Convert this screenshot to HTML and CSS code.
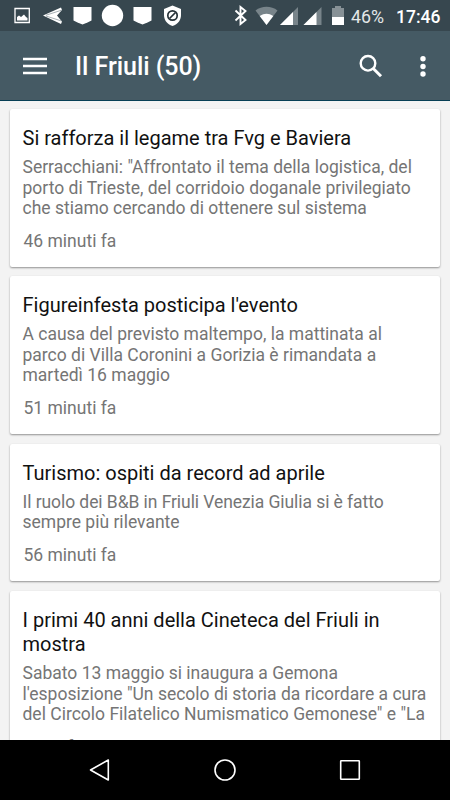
FILE: index.html
```html
<!DOCTYPE html>
<html lang="it">
<head>
  <meta charset="UTF-8">
  <title>Il Friuli</title>
  <link rel="stylesheet" href="styles.css">
</head>
<body>
  <div class="status-bar">
    <svg class="status-icons" width="190" height="31" viewBox="0 0 190 31" fill="#fff">
      <path d="M15 8.500h14.300v14H15z" fill="none" stroke="#fff" stroke-width="1.300"/>
      <path d="M17 20.500v-3.500l2-1.500 2 1.500 3-2.500 2 2.500 1.500 1v2.500z"/>
      <path d="M43 15.500L61 7.500l1 2.500-5 5.500 5 6-1 2.500z"/>
      <path d="M46 15.200l15.500-5M46 16l15.500 5" fill="none" stroke="#6b7a82" stroke-width=".6"/>
      <path d="M73.500 7h18v13.500l-4 2-5 2-5-2-4-2z"/>
      <circle cx="112.500" cy="15.500" r="10.700"/>
      <path d="M133.500 7h18v13.500l-4 2-5 2-5-2-4-2z"/>
      <path d="M172.500 5.500l8.500 3.500v6c0 5-3 9-8.500 11-5.500-2-8.500-6-8.500-11V9z"/>
      <circle cx="172.500" cy="15.500" r="4.700" fill="none" stroke="#263238" stroke-width="1.700"/>
      <path d="M169.500 18.500l6-6" stroke="#263238" stroke-width="1.700"/>
    </svg>
    <svg class="system-icons" width="120" height="31" viewBox="230 0 120 31" fill="#fff">
      <path d="M235.500 10.500l10 9.500-5 4V7l5 4-10 9.500" fill="none" stroke="#fff" stroke-width="1.900"/>
      <path d="M255.500 10.500a18 18 0 0 1 22 0L266.500 25z" fill="#78848a"/>
      <path d="M259.700 16a12 12 0 0 1 13.600 0L266.500 25z"/>
      <path d="M298 7v18h-18z" fill="#78848a"/>
      <path d="M293 12v13h-13z"/>
      <path d="M321.500 7v18h-18z" fill="#78848a"/>
      <path d="M316.500 12v13h-13z"/>
      <path d="M332 8h3V6h6v2h3v9h-12z" fill="#879196"/>
      <path d="M332 17h12v8h-12z"/>
    </svg>
    <span class="battery">46%</span>
    <span class="clock">17:46</span>
  </div>

  <div class="toolbar">
    <svg class="menu" width="24" height="18" viewBox="0 0 24 18">
      <path d="M0 2h24M0 9h24M0 16h24" stroke="#fff" stroke-width="2.300"/>
    </svg>
    <h1>Il Friuli (50)</h1>
    <svg class="search" width="24" height="24" viewBox="0 0 24 24" fill="none" stroke="#fff">
      <circle cx="9" cy="9.300" r="7.300" stroke-width="2.400"/>
      <path d="M14 14.300l8 8" stroke-width="3"/>
    </svg>
    <svg class="more" width="6" height="22" viewBox="0 0 6 22" fill="#fff">
      <circle cx="3" cy="3.800" r="2.700"/>
      <circle cx="3" cy="11.500" r="2.700"/>
      <circle cx="3" cy="19" r="2.700"/>
    </svg>
  </div>

  <div class="feed">
    <div class="card">
      <h2>Si rafforza il legame tra Fvg e Baviera</h2>
      <p>Serracchiani: "Affrontato il tema della logistica, del<br>porto di Trieste, del corridoio doganale privilegiato<br>che stiamo cercando di ottenere sul sistema</p>
      <div class="time">46 minuti fa</div>
    </div>
    <div class="card">
      <h2>Figureinfesta posticipa l'evento</h2>
      <p>A causa del previsto maltempo, la mattinata al<br>parco di Villa Coronini a Gorizia è rimandata a<br>martedì 16 maggio</p>
      <div class="time">51 minuti fa</div>
    </div>
    <div class="card">
      <h2>Turismo: ospiti da record ad aprile</h2>
      <p><span class="tight">Il ruolo dei B&amp;B in Friuli Venezia Giulia si è fatto</span><br>sempre più rilevante</p>
      <div class="time">56 minuti fa</div>
    </div>
    <div class="card">
      <h2>I primi 40 anni della Cineteca del Friuli in<br>mostra</h2>
      <p>Sabato 13 maggio si inaugura a Gemona<br>l'esposizione "Un secolo di storia da ricordare a cura<br>del Circolo Filatelico Numismatico Gemonese" e "La</p>
      <div class="time">1 ora fa</div>
    </div>
  </div>

  <div class="nav-bar">
    <svg width="24" height="24" viewBox="0 0 24 24"><path d="M20.300 2v20L2.500 12z"/></svg>
    <svg width="24" height="24" viewBox="0 0 24 24"><circle cx="12" cy="12" r="10"/></svg>
    <svg width="24" height="24" viewBox="0 0 24 24"><rect x="2.700" y="2.700" width="18.600" height="18.600" rx=".5"/></svg>
  </div>
</body>
</html>
```
FILE: styles.css
```css
body {
  display: flex;
  flex-direction: column;
  height: 800px;
  margin: 0;
  overflow: hidden;
  font-family: Roboto, sans-serif;
  background: #f3f3f3;
}
h1, h2, p {
  margin: 0;
  font-weight: 400;
}
svg {
  display: block;
  flex: none;
}
.status-bar {
  display: flex;
  flex: none;
  align-items: center;
  height: 31px;
  background: #37474f;
  color: #fff;
  white-space: nowrap;
}
.system-icons {
  margin-left: 40px;
}
.battery {
  width: 45px;
  margin-left: 1px;
  padding-top: 2px;
  font-size: 17.8px;
  color: #e4e7e8;
}
.clock {
  padding-top: 2px;
  font-size: 17.5px;
  font-weight: 500;
}
.toolbar {
  display: flex;
  flex: none;
  align-items: center;
  box-sizing: border-box;
  height: 70px;
  padding: 0 24.5px 0 23px;
  background: #455a64;
  border-bottom: 1px solid #073f55;
}
.toolbar h1 {
  flex: 1;
  margin-left: 28px;
  padding-top: 2px;
  font-size: 25px;
  letter-spacing: -0.05px;
  font-weight: 500;
  color: #fff;
}
.search {
  margin-right: 37px;
}
.feed {
  display: flex;
  flex: 1;
  flex-direction: column;
  gap: 10px;
  min-height: 0;
  padding: 8px 10px 0;
  overflow: hidden;
}
.card {
  flex: none;
  box-sizing: border-box;
  padding: 17px 13px 15px 12.5px;
  background: #fff;
  border-radius: 2px;
  box-shadow: 0 1px 2px rgba(0, 0, 0, 0.4);
  white-space: nowrap;
}
.card:first-child {
  margin-bottom: -0.5px;
}
.card h2 {
  font-size: 20px;
  line-height: 24px;
  color: #111;
}
.card p {
  margin-top: 7px;
  font-size: 17.5px;
  line-height: 20.6px;
  color: #757575;
}
.tight {
  letter-spacing: -0.07px;
}
.time {
  margin: 12.3px 0 0 1px;
  font-size: 17.5px;
  line-height: 20.6px;
  color: #757575;
}
.nav-bar {
  display: flex;
  flex: none;
  align-items: center;
  justify-content: center;
  gap: 101px;
  height: 60px;
  background: #000;
}
.nav-bar path, .nav-bar circle, .nav-bar rect {
  fill: none;
  stroke: #fff;
  stroke-width: 1.6;
  stroke-linejoin: round;
}
```
